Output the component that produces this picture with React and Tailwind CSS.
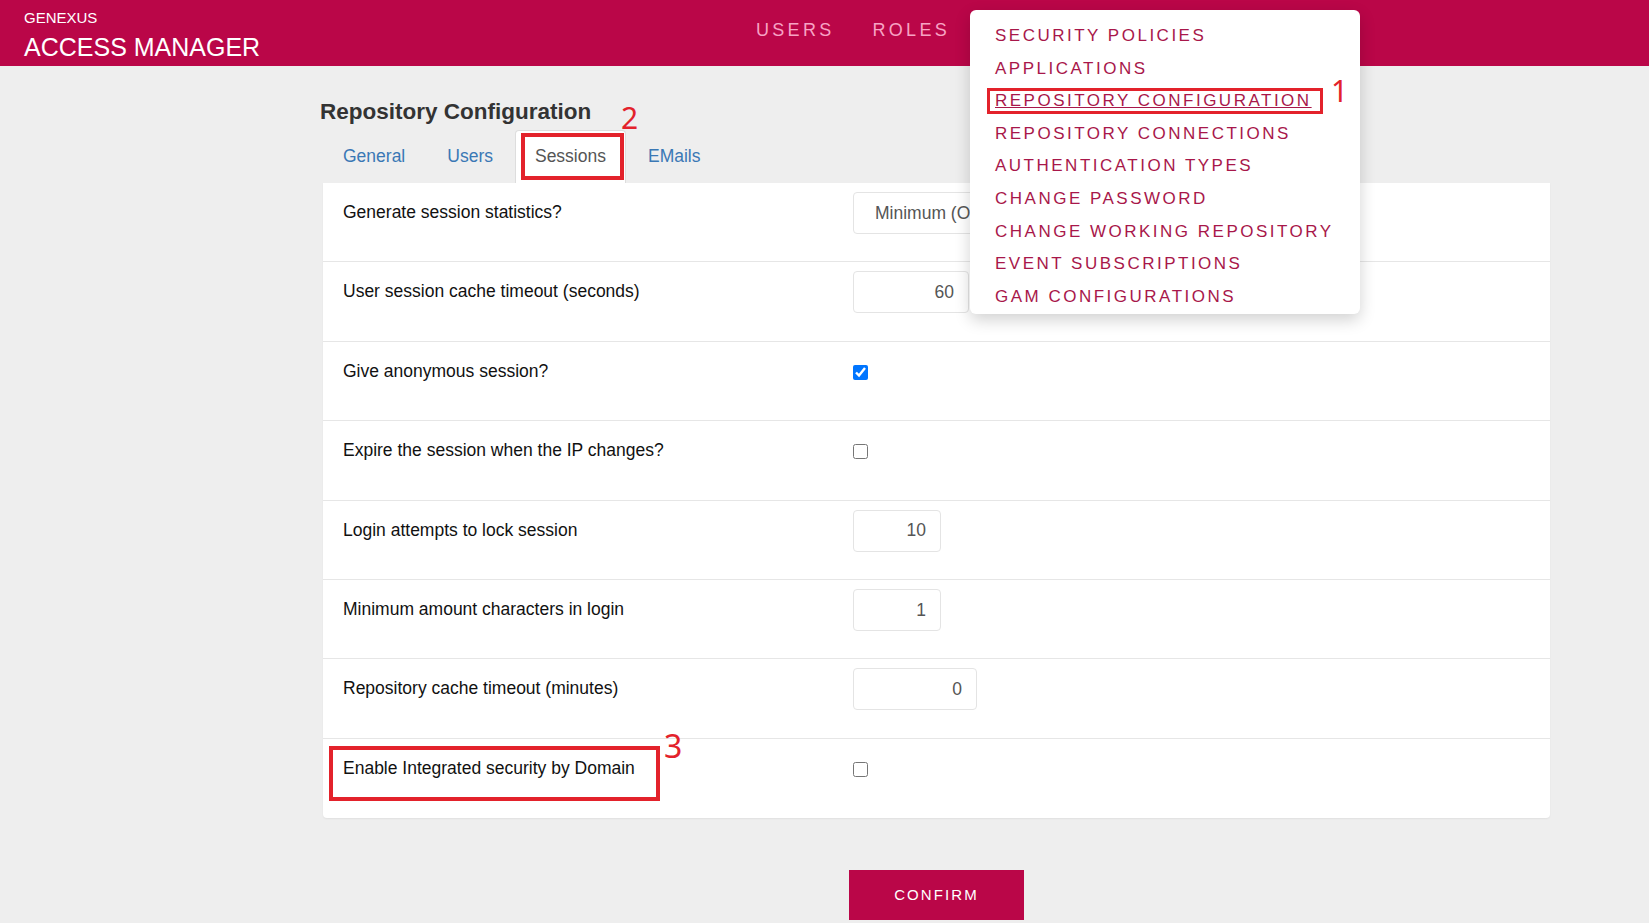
import React from "react";

const rows = [
  { label: "Generate session statistics?", type: "select", value: "Minimum (Only authenticated users)" },
  { label: "User session cache timeout (seconds)", type: "input", value: "60", w: "w-[116px]" },
  { label: "Give anonymous session?", type: "check", checked: true },
  { label: "Expire the session when the IP changes?", type: "check", checked: false },
  { label: "Login attempts to lock session", type: "input", value: "10", w: "w-[88px]" },
  { label: "Minimum amount characters in login", type: "input", value: "1", w: "w-[88px]" },
  { label: "Repository cache timeout (minutes)", type: "input", value: "0", w: "w-[124px]" },
  { label: "Enable Integrated security by Domain", type: "check", checked: false },
];

const menu = [
  "SECURITY POLICIES",
  "APPLICATIONS",
  "REPOSITORY CONFIGURATION",
  "REPOSITORY CONNECTIONS",
  "AUTHENTICATION TYPES",
  "CHANGE PASSWORD",
  "CHANGE WORKING REPOSITORY",
  "EVENT SUBSCRIPTIONS",
  "GAM CONFIGURATIONS",
];

function Control({ row }) {
  if (row.type === "select") {
    return (
      <div className="pt-[9px]">
        <div className="flex h-[42px] w-[250px] items-center overflow-hidden whitespace-nowrap rounded-[4px] border border-[#e4e4e4] bg-white pl-[21px] text-[17.5px] text-[#555555]">
          {row.value}
        </div>
      </div>
    );
  }
  if (row.type === "input") {
    return (
      <div className="pt-[9px]">
        <div
          className={`flex h-[42px] ${row.w} items-center justify-end rounded-[4px] border border-[#e4e4e4] bg-white pr-[14px] text-[17.5px] text-[#555555]`}
        >
          {row.value}
        </div>
      </div>
    );
  }
  return (
    <div className="pt-[23px]">
      <input
        type="checkbox"
        defaultChecked={row.checked}
        className="block h-[15px] w-[15px] accent-[#0075ff]"
      />
    </div>
  );
}

export default function App() {
  return (
    <div className="relative min-h-[923px] overflow-hidden bg-[#eeeeee] font-['Liberation_Sans',Arial,sans-serif]">
      {/* Header */}
      <header className="flex h-[66px] bg-[#ba0648] px-6">
        <div className="w-[713px] shrink-0 pt-[9px] text-white">
          <div className="text-[15px] leading-[18px]">GENEXUS</div>
          <div className="mt-[5px] text-[25px] leading-[30px]">ACCESS MANAGER</div>
        </div>
        <nav className="flex pt-[18px] text-[18px] leading-6 tracking-[3.3px] text-[#f7a3c4]">
          <span className="px-[19px]">USERS</span>
          <span className="px-[19px]">ROLES</span>
          <span className="px-[19px]">OPTIONS</span>
        </nav>
      </header>

      {/* Main content */}
      <main className="pl-[320px] pr-[99px]">
        <h1 className="mt-[33px] text-[22.5px] font-bold leading-[26px] text-[#333333]">
          Repository Configuration
        </h1>
        <div className="ml-[3px] mt-[5px] flex text-[17.5px] leading-6">
          <span className="mr-[2px] border border-transparent px-[19px] pb-[14px] pt-[13px] text-[#3a78b5]">General</span>
          <span className="mr-[2px] border border-transparent px-[19px] pb-[14px] pt-[13px] text-[#3a78b5]">Users</span>
          <span className="mr-[2px] rounded-t-[4px] border border-b-0 border-[#dddddd] bg-white px-[19px] pb-[15px] pt-[13px] text-[#555555]">
            Sessions
          </span>
          <span className="mr-[2px] border border-transparent px-[19px] pb-[14px] pt-[13px] text-[#3a78b5]">EMails</span>
        </div>

        <div className="ml-[3px] rounded-b-[4px] bg-white shadow-[0_1px_2px_rgba(0,0,0,0.06)]">
          {rows.map((row, i) => (
            <div
              key={row.label}
              className={`flex h-[79.4px] ${i < rows.length - 1 ? "border-b border-[#e6e6e6]" : ""}`}
            >
              <div className="w-[530px] shrink-0 pl-5 pt-[17px] text-[17.5px] leading-6 text-[#111111]">
                {row.label}
              </div>
              <Control row={row} />
            </div>
          ))}
        </div>

        <div className="ml-[3px] flex justify-center pt-[52px]">
          <button className="h-[50px] w-[175px] bg-[#ba0648] text-[15px] tracking-[2.1px] text-white">
            CONFIRM
          </button>
        </div>
      </main>

      {/* Dropdown menu */}
      <div className="absolute left-[970px] top-[10px] h-[304px] w-[390px] rounded-[6px] bg-white pl-[25px] pt-[10px] shadow-[0_6px_16px_rgba(0,0,0,0.18)]">
        {menu.map((m) => (
          <div
            key={m}
            className={`whitespace-nowrap text-[17px] leading-[32.6px] tracking-[2.5px] text-[#a8174a] ${
              m === "REPOSITORY CONFIGURATION" ? "underline" : ""
            }`}
          >
            {m}
          </div>
        ))}
      </div>

      {/* Annotations */}
      <div className="absolute left-[987px] top-[88px] h-[26px] w-[336px] border-[3px] border-[#e3222b]" />
      <div className="absolute left-[1331px] top-[74px] font-['Noto_Sans',sans-serif] text-[30px] leading-[34px] text-[#e3222b]">1</div>

      <div className="absolute left-[521px] top-[133px] h-[47px] w-[103px] border-4 border-[#e3222b]" />
      <div className="absolute left-[621px] top-[101px] font-['Noto_Sans',sans-serif] text-[30px] leading-[34px] text-[#e3222b]">2</div>

      <div className="absolute left-[329px] top-[746px] h-[55px] w-[331px] border-4 border-[#e3222b]" />
      <div className="absolute left-[664px] top-[728px] font-['Noto_Sans',sans-serif] text-[32px] leading-[36px] text-[#e3222b]">3</div>
    </div>
  );
}
